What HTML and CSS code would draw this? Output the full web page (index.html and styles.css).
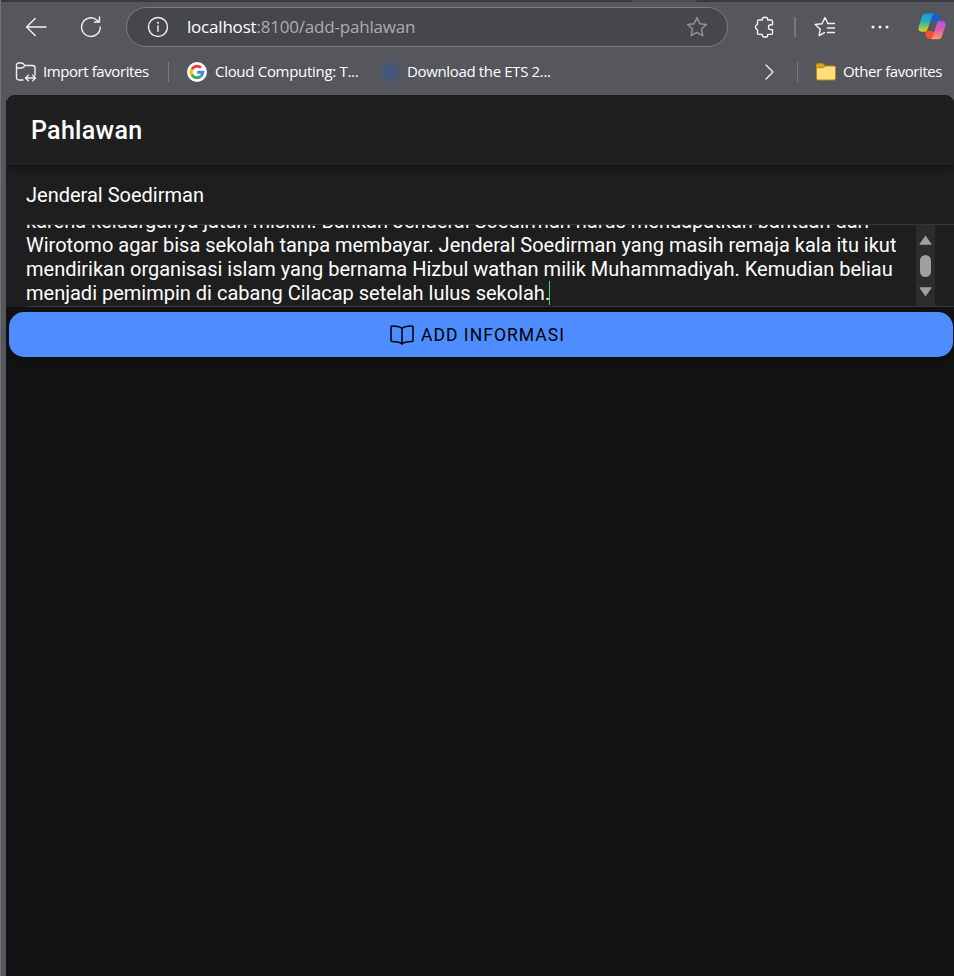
FILE: index.html
```html
<!DOCTYPE html>
<html lang="id">
<head>
<meta charset="utf-8">
<title>Pahlawan</title>
<link rel="stylesheet" href="styles.css">
</head>
<body>
<div class="browser">
  <div class="tabstrip"><span class="tab-edge"></span></div>
  <div class="toolbar">
    <svg class="icon back" width="22" height="20" viewBox="0 0 22 20"><path d="M10.2 1.5 1.5 10l8.7 8.5M1.5 10H21"/></svg>
    <svg class="icon reload" width="22" height="22" viewBox="0 0 22 22"><path d="M20.2 11a9.3 9.3 0 1 1-3.1-6.8L19.5 6M19.5 1v5h-5"/></svg>
    <div class="address">
      <svg class="icon info" width="22" height="22" viewBox="0 0 22 22"><circle cx="11" cy="11" r="9.5"/><path d="M11 9.8v5.5"/><circle class="dot" cx="11" cy="6.8" r="1"/></svg>
      <span class="url"><b>localhost</b>:8100/add-pahlawan</span>
      <svg class="icon star" width="22" height="22" viewBox="0 0 22 22"><path d="M11 1.6 13.8 7.7l6.6.8-4.9 4.6 1.3 6.6L11 16.4l-5.8 3.3 1.3-6.6L1.600 8.500l6.600-.8Z"/></svg>
    </div>
    <svg class="icon puzzle" width="22" height="22" viewBox="0 0 22 22"><path d="M5 4h3.200a2.800 2.800 0 0 1 5.600 0H17q1.500 0 1.500 1.500v3.300h-1.600a2.400 2.400 0 0 0 0 4.800h1.600v3.300q0 1.500-1.500 1.500h-3.200a2.800 2.800 0 0 1-5.600 0H5q-1.500 0-1.500-1.500v-3.100a2.800 2.800 0 0 1 0-5.400V5.500Q3.500 4 5 4Z"/></svg>
    <span class="rule tool-rule"></span>
    <svg class="icon favlist" width="22" height="22" viewBox="0 0 22 22"><path d="M14 7.500 11 1.500 8 7.700l-6.700.8 4.900 4.700-1.100 6.500 5.300-3M14 7.500h6.500M13.500 12h7M13.500 16.500h7M14 7.500h-.5"/></svg>
    <svg class="dots" width="18" height="4" viewBox="0 0 18 4"><circle cx="2" cy="2" r="1.500"/><circle cx="9" cy="2" r="1.500"/><circle cx="16" cy="2" r="1.500"/></svg>
    <svg class="copilot" width="28" height="27" viewBox="0 0 28 27">
      <defs>
        <linearGradient id="ca" x1="0" y1="0" x2="0" y2="1"><stop offset="0" stop-color="#1696ee"/><stop offset=".45" stop-color="#27b3b0"/><stop offset=".8" stop-color="#9acb45"/><stop offset="1" stop-color="#f5c51c"/></linearGradient>
        <linearGradient id="cb" x1="0" y1="0" x2="0" y2="1"><stop offset="0" stop-color="#a653ee"/><stop offset=".5" stop-color="#e65ca5"/><stop offset="1" stop-color="#ff9a66"/></linearGradient>
      </defs>
      <path fill="#155fd4" d="M12 .5h5q2.800 0 3.600 2.700L22 8h-5l-6 2Z"/>
      <path fill="#f2552c" d="M7 18h6l4 1-2 7h-4q-2.400 0-3-2.600Z"/>
      <path fill="url(#ca)" d="M8 .5h8q-1.500.8-2.300 3.500l-4 12q-.8 2.800-3.500 2.800H4Q-.4 18.800.6 14L4 3.700Q5 .5 8 .5Z"/>
      <path fill="url(#cb)" d="M20.500 8H24q4.400.2 3.500 4.700L24 23q-1 3.300-4 3.300h-7.500q1.800-.8 2.600-3.500l3.600-12Q19.300 8 20.500 8Z"/>
    </svg>
  </div>
  <div class="bookmarks">
    <svg class="icon import" width="22" height="20" viewBox="0 0 22 20"><path d="M8 18H4q-2.500 0-2.500-2.500v-12Q1.500 1 4 1h2.500q1 0 1.800.8L10 3.500h7.500Q20 3.500 20 6v7M1.500 6h5q1 0 1.800-.8L10 3.500M10.500 16h10M13.300 13.200 10.500 16l2.800 2.800M17.700 13.200l2.800 2.800-2.800 2.800"/></svg>
    <span class="label import-label">Import favorites</span>
    <span class="rule mark-rule"></span>
    <svg class="google" width="20" height="20" viewBox="0 0 20 20"><circle cx="10" cy="10" r="10" fill="#fff"/><g fill="none" stroke-width="2.900"><path stroke="#ea4335" d="M4.900 7.200A5.800 5.800 0 0 1 14 5.800"/><path stroke="#fbbc05" d="M4.900 7.200a5.800 5.800 0 0 0 0 5.600"/><path stroke="#34a853" d="M4.900 12.800a5.800 5.800 0 0 0 8.800 1.600"/><path stroke="#4285f4" d="M13.700 14.400a5.800 5.800 0 0 0 2.100-4.100H10.200"/></g></svg>
    <span class="label cloud-label">Cloud Computing: T...</span>
    <svg class="flower" width="20" height="20" viewBox="0 0 20 20"><circle cx="10" cy="10" r="3.800"/><circle cx="17" cy="10" r="2.500"/><circle cx="13.500" cy="3.800" r="2.500"/><circle cx="6.500" cy="3.800" r="2.500"/><circle cx="3" cy="10" r="2.500"/><circle cx="6.500" cy="16.200" r="2.500"/><circle cx="13.500" cy="16.200" r="2.500"/><path d="M8 10h4M10 8v4"/></svg>
    <span class="label ets-label">Download the ETS 2...</span>
    <svg class="icon chevron" width="9" height="16" viewBox="0 0 9 16"><path d="m1 1 7 7-7 7"/></svg>
    <span class="rule other-rule"></span>
    <svg class="folder" width="20" height="18" viewBox="0 0 20 18"><path fill="#ffdc7d" stroke="#b98b12" d="M.5 2q0-1.500 1.500-1.500h4.500L9 3h9q1.500 0 1.500 1.500v11q0 1.500-1.500 1.500H2Q.5 17 .5 15.500Z"/><path fill="#dba514" stroke="#b98b12" d="M.5 2q0-1.500 1.500-1.500h5L9 3 7.500 4.700H.5Z"/></svg>
    <span class="label other-label">Other favorites</span>
  </div>
  <main class="page">
    <header class="header"><h1>Pahlawan</h1></header>
    <div class="item name">Jenderal Soedirman</div>
    <div class="item story">
      <div class="textarea">
        <div class="text">
          <div>karena keluarganya jatuh miskin. Bahkan Jenderal Soedirman harus mendapatkan bantuan dari</div>
          <div>Wirotomo agar bisa sekolah tanpa membayar. Jenderal Soedirman yang masih remaja kala itu ikut</div>
          <div>mendirikan organisasi islam yang bernama Hizbul wathan milik Muhammadiyah. Kemudian beliau</div>
          <div>menjadi pemimpin di cabang Cilacap setelah lulus sekolah.<span class="caret"></span></div>
        </div>
        <div class="scrollbar">
          <svg width="13" height="10" viewBox="0 0 13 10"><path d="M6.500.5 12.500 9q.2.800-.7.800H1.200Q.3 9.800.5 9Z"/></svg>
          <span class="thumb"></span>
          <svg width="13" height="10" viewBox="0 0 13 10"><path d="M6.500 9.500.5 1Q.3.200 1.200.2h10.600q.9 0 .7.800Z"/></svg>
        </div>
      </div>
    </div>
    <button class="add" type="button">
      <svg width="24" height="20" viewBox="0 0 24 20"><path d="M12 3.500Q9.500 1 2 1q-1 0-1 1v13.500q0 1 1 1 7.500 0 10 2.500 2.500-2.500 10-2.500 1 0 1-1V2q0-1-1-1-7.500 0-10 2.500ZV19"/></svg>
      <span>ADD INFORMASI</span>
    </button>
  </main>
</div>
</body>
</html>
```

FILE: styles.css
```css
* { box-sizing: border-box; }
body { margin: 0; background: #56575c; overflow: hidden; }
.browser {
  width: 954px;
  height: 976px;
  display: flex;
  flex-direction: column;
  background: #56575c;
  border-left: 1px solid #727378;
  font-family: "Open Sans", "Noto Sans", sans-serif;
  color: #fff;
}
svg { display: block; flex: none; }
.icon { fill: none; stroke: #f2f2f2; stroke-width: 1.4; stroke-linejoin: round; stroke-linecap: round; }
.icon .dot { fill: #f2f2f2; stroke: none; }
.rule { flex: none; width: 1px; height: 20px; background: #77787d; }

.tabstrip { height: 2px; flex: none; background: #38393d; }
.tab-edge { display: block; width: 64px; height: 2px; margin-left: 631px; background: #4b4c50; }

.toolbar { flex: none; height: 49px; display: flex; align-items: center; }
.back { margin-left: 24px; }
.reload { margin-left: 33px; }
.address {
  width: 602px;
  height: 40px;
  margin-left: 24px;
  padding: 0 19px 0 20px;
  display: flex;
  align-items: center;
  border: 1px solid #7c7d81;
  border-radius: 20px;
  background: #46474b;
}
.url { margin-left: 18px; font-size: 17px; line-height: 22px; letter-spacing: -.2px; color: #adadaf; white-space: nowrap; }
.url b { font-weight: 400; color: #fff; }
.star { margin-left: auto; stroke: #929397; }
.puzzle { margin-left: 26px; }
.tool-rule { width: 2px; margin-left: 18px; }
.favlist { margin-left: 18px; }
.dots { margin-left: 35px; fill: #f2f2f2; }
.copilot { margin-left: 29px; }

.bookmarks { flex: none; height: 44px; display: flex; align-items: center; padding-bottom: 2px; }
.label { font-size: 15px; line-height: 20px; padding-bottom: 2px; white-space: nowrap; flex: none; }
.import { margin-left: 14px; }
.import-label { width: 119px; margin-left: 6px; letter-spacing: -.42px; }
.mark-rule { margin-left: 6px; }
.google { margin-left: 18px; }
.cloud-label { width: 158px; margin-left: 8px; letter-spacing: -.3px; }
.flower { margin-left: 7px; fill: none; stroke: #3e5590; stroke-width: 1.4; }
.ets-label { margin-left: 7px; letter-spacing: -.35px; }
.chevron { margin-left: auto; }
.other-rule { margin-left: 23px; }
.folder { margin-left: 18px; }
.other-label { width: 111px; margin-left: 7px; letter-spacing: -.42px; }

.page {
  flex: 1;
  display: flex;
  flex-direction: column;
  margin-left: 5px;
  border-radius: 9px 9px 0 0;
  overflow: hidden;
  background: #121212;
  font-family: Roboto, sans-serif;
}
.header {
  position: relative;
  z-index: 1;
  flex: none;
  height: 70px;
  padding: 2px 25px 0;
  display: flex;
  align-items: center;
  background: #1f1f1f;
  box-shadow: 0 2px 8px rgba(0, 0, 0, .5);
}
h1 { margin: 0; font-size: 25px; line-height: 30px; font-weight: 500; letter-spacing: .3px; }
.item { flex: none; margin: 0; padding-left: 20px; background: #1e1e1e; font-size: 20px; line-height: 24px; }
.name { height: 59px; padding-top: 18px; }
.story { height: 83px; }
.textarea {
  height: 83px;
  display: flex;
  justify-content: space-between;
  border-top: 1px solid #363636;
  border-bottom: 1px solid #363636;
  padding-right: 19px;
}
.text { height: 81px; padding-bottom: 1px; display: flex; flex-direction: column; justify-content: flex-end; overflow: hidden; white-space: nowrap; }
.text > div { flex: none; height: 24px; display: flex; }
.caret { width: 1px; height: 24px; margin-left: -1px; background: #42d77d; }
.scrollbar {
  width: 19px;
  display: flex;
  flex-direction: column;
  align-items: center;
  gap: 10px;
  padding-top: 10px;
  background: #2c2c2c;
}
.scrollbar svg { fill: #9f9f9f; }
.thumb { width: 11px; height: 22px; border-radius: 6px; background: #9f9f9f; }
.add {
  flex: none;
  height: 45px;
  margin: 5px 1px 0 3px;
  padding: 0 7px 0 0;
  display: flex;
  align-items: center;
  justify-content: center;
  gap: 7px;
  border: 0;
  border-radius: 15px;
  background: #4d8dff;
  color: #000;
  font: 400 17.5px/20px Roboto, sans-serif;
  letter-spacing: 1.05px;
  box-shadow: 0 3px 6px rgba(0, 0, 0, .25);
}
.add svg { fill: none; stroke: #000; stroke-width: 1.5; stroke-linejoin: round; }
```
